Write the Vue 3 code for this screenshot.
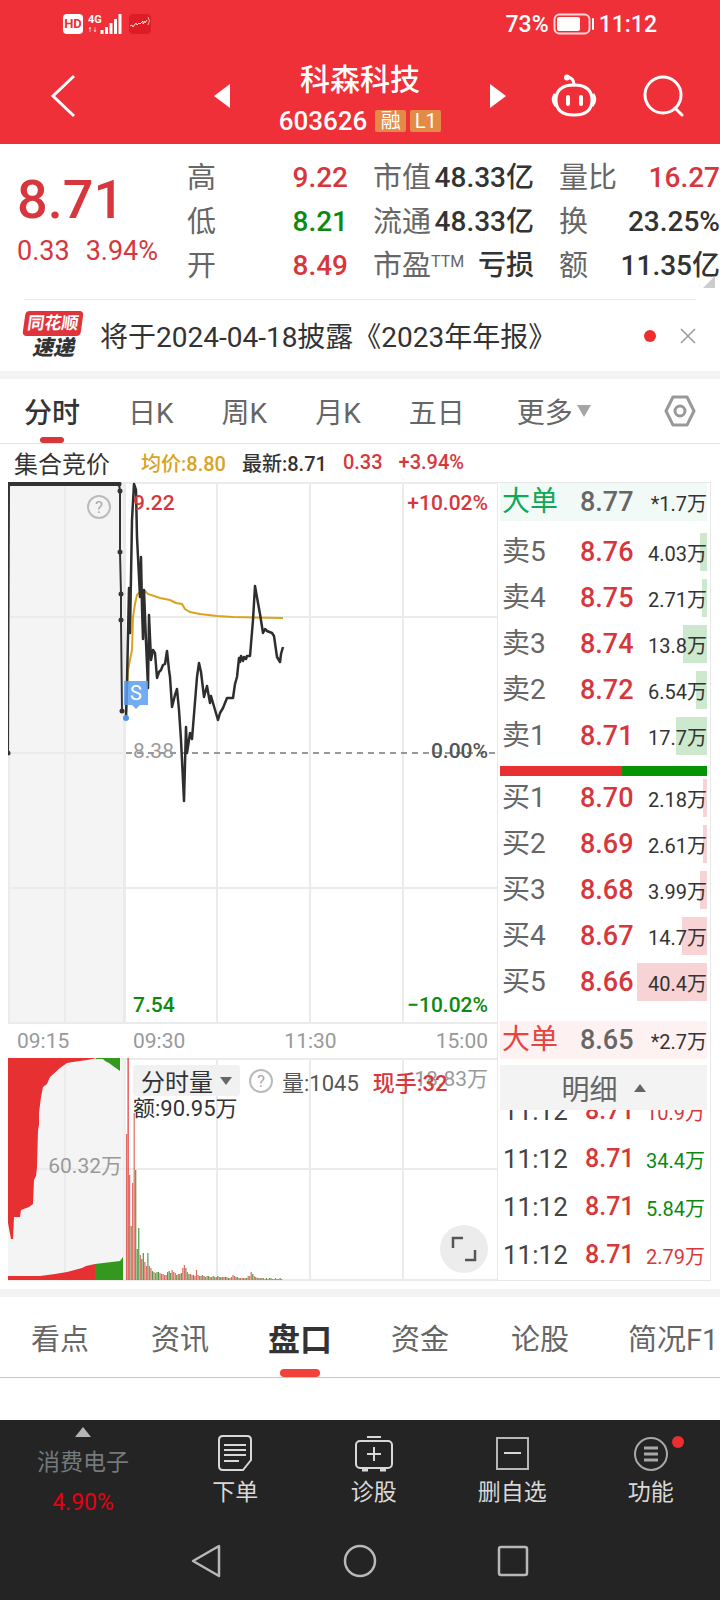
<template>
  <div class="quote-view">
    <header class="header">
      <div class="status-bar">
        <div class="status-left">
          <span class="hd">HD</span>
          <svg class="signal" width="36" height="24" viewBox="0 0 36 24">
            <text x="0" y="11" class="signal-text">4G</text>
            <path d="M2 20v-4M1 17l1-2 1 2M7 15v4M6 18l1 2 1-2" stroke="#fff" stroke-opacity=".6" fill="none" />
            <path d="M14 22v-4M18.500 22v-7M23 22v-11M27.500 22v-15M32 22V2" stroke="#fff" stroke-width="3" />
          </svg>
          <svg class="app-badge" width="22" height="20" viewBox="0 0 22 20">
            <rect width="22" height="20" rx="4" fill="#de1c25" />
            <path d="M1 12l2-1 1 2 3-4 1 2 2-2 1 1 3-3v3l2-3v2l2-3" fill="none" stroke="#ffd9d0" />
            <path d="M19 3q3 4 0 8" fill="none" stroke="#ffb0a0" />
          </svg>
        </div>
        <div class="status-right">
          <span>73%</span>
          <svg width="42" height="22" viewBox="0 0 42 22">
            <rect x="1.500" y="1.500" width="35" height="19" rx="5" fill="none" stroke="#fff" stroke-opacity=".8" stroke-width="2" />
            <rect x="4" y="4" width="23" height="14" rx="2" fill="#fff" />
            <path d="M40 6v10" stroke="#fff" stroke-width="2" stroke-linecap="round" />
          </svg>
          <span>11:12</span>
        </div>
      </div>
      <div class="title-bar">
        <button class="back" aria-label="返回">
          <svg width="26" height="44" viewBox="0 0 26 44"><path d="M24 2L3 22l21 20" fill="none" stroke="#fff" stroke-width="3" /></svg>
        </button>
        <div class="switcher">
          <button aria-label="上一只">
            <svg width="16" height="24" viewBox="0 0 16 24"><path d="M16 0v24L0 12z" fill="#fff" /></svg>
          </button>
          <div class="stock">
            <h1>科森科技</h1>
            <p><span class="code">603626</span><span class="tag">融</span><span class="tag">L1</span></p>
          </div>
          <button aria-label="下一只">
            <svg width="16" height="24" viewBox="0 0 16 24"><path d="M0 0v24l16-12z" fill="#fff" /></svg>
          </button>
        </div>
        <button aria-label="智能助手">
          <svg width="46" height="44" viewBox="0 0 46 44" fill="none" stroke="#fff" stroke-width="3">
            <path d="M23 11c0-4-1-7-6-8" stroke-linecap="round" />
            <circle cx="16" cy="3.500" r="2" fill="#fff" stroke-width="2" />
            <path d="M23 11C11 11 5 16 5 26S11 41 23 41s18-5 18-15S35 11 23 11z" />
            <path d="M4 20q-4 6 1 12M42 20q4 6-1 12" />
            <path d="M17 23v7M30 23v7" stroke-width="4" stroke-linecap="round" />
          </svg>
        </button>
        <button aria-label="搜索">
          <svg width="42" height="42" viewBox="0 0 42 42" fill="none" stroke="#fff" stroke-width="3">
            <circle cx="20" cy="20" r="18" />
            <path d="M32 33l7 7" stroke-linecap="round" />
          </svg>
        </button>
      </div>
    </header>

    <section class="summary">
      <div class="price">
        <strong>8.71</strong>
        <p><span>0.33</span><span>3.94%</span></p>
      </div>
      <dl v-for="(group, index) in stats" :key="index">
        <div v-for="item in group" :key="item.label">
          <dt>{{ item.label }}<sup v-if="item.sup">{{ item.sup }}</sup></dt>
          <dd :class="item.tone">{{ item.value }}</dd>
        </div>
      </dl>
      <i class="corner"></i>
    </section>

    <section class="notice">
      <div class="notice-logo"><b>同花顺</b><em>速递</em></div>
      <a href="#">将于2024-04-18披露《2023年年报》</a>
      <i class="dot"></i>
      <button aria-label="关闭">
        <svg width="16" height="16" viewBox="0 0 16 16"><path d="M1 1l14 14M15 1L1 15" stroke="#999" stroke-width="1.500" /></svg>
      </button>
    </section>

    <nav class="period-tabs">
      <button v-for="tab in periods" :key="tab" :class="{ active: tab === period }" @click="period = tab">{{ tab }}</button>
      <button class="more">更多<i></i></button>
      <button class="settings" aria-label="设置">
        <svg width="32" height="32" viewBox="0 0 32 32" fill="none" stroke="#999" stroke-width="3">
          <path d="M9 2h14l7 14-7 14H9L2 16z" stroke-linejoin="round" />
          <circle cx="16" cy="16" r="5" />
        </svg>
      </button>
    </nav>

    <div class="legend">
      <span class="auction">集合竞价</span>
      <span class="avg">均价:8.80</span>
      <span>最新:8.71</span>
      <span class="up">0.33</span>
      <span class="up">+3.94%</span>
    </div>

    <main class="board">
      <div class="charts">
        <svg class="chart" viewBox="0 0 489 542">
          <rect x="0" y="0" width="115" height="542" fill="#f4f4f5" />
          <rect x="115" y="0" width="3" height="542" fill="#ebebeb" />
          <path d="M0 1h489M0 135h489M0 406h489M0 541h489M57 0v541M209 0v541M302 0v541M395 0v541M0 271h116M1 0v541" class="grid" />
          <path d="M118 271h371" stroke="#999" stroke-width="2" stroke-dasharray="6 5" />
          <polyline :points="auctionLine" fill="none" stroke="#333" stroke-width="2" />
          <path d="M0 2h112" stroke="#333" stroke-width="4" />
          <circle v-for="(p, i) in auctionDots" :key="i" :cx="p[0]" :cy="p[1]" r="2.500" fill="#333" />
          <circle cx="91" cy="25" r="11" fill="none" stroke="#bbb" stroke-width="2" />
          <text x="91" y="31" class="mark">?</text>
          <polyline :points="averageLine" fill="none" stroke="#dba21c" stroke-width="2" />
          <polyline :points="priceLine" fill="none" stroke="#2e2e2e" stroke-width="2.500" stroke-linejoin="round" />
          <circle cx="118" cy="236" r="3" fill="#4a94ee" />
          <path d="M116 199h24v24h-8l-4 4-4-4h-8z" fill="#5b9eef" fill-opacity=".85" />
          <text x="128" y="218" class="sell">S</text>
          <text x="125" y="28" class="up">9.22</text>
          <text x="480" y="28" class="up end">+10.02%</text>
          <text x="125" y="276" class="flat">8.38</text>
          <text x="480" y="276" class="base end">0.00%</text>
          <text x="125" y="530" class="down">7.54</text>
          <text x="480" y="530" class="down end">−10.02%</text>
        </svg>

        <div class="axis">
          <span class="axis-auction">09:15</span>
          <div><span>09:30</span><span>11:30</span><span>15:00</span></div>
        </div>

        <div class="volume">
          <svg class="chart" viewBox="0 0 489 223">
            <rect x="0" y="0" width="115" height="223" fill="#f4f4f5" />
            <rect x="115" y="0" width="3" height="223" fill="#f0f0f0" />
            <path d="M0 1h489M0 111h489M0 222h489M57 0v222M209 0v222M302 0v222M395 0v222" class="grid" />
            <path d="M0 0H89L79 2 65 4 59 5 52 10 42 19 39 26 35 29 33 39 31 55 31 67 30 72 29 109 28 118 26 122 25 146 21 149 13 152 12 159 6 159 5 181H3L0 165z" fill="#e63031" />
            <path d="M88 0h24v13l-7-5-4-3-4-2-2-2h-7z" fill="#34981f" />
            <path d="M0 222v-4h32l15-2 12-2 15-4 4-2 9-2v16z" fill="#e63031" />
            <path d="M87 222v-16l25-3 3-4v23z" fill="#34981f" />
            <rect v-for="bar in volumeBars" :key="bar.x" :x="bar.x" :y="222 - bar.h" width="1.200" :height="bar.h" :fill="bar.color" />
            <text x="114" y="115" class="flat end">60.32万</text>
            <text x="480" y="28" class="flat end">18.83万</text>
          </svg>
          <div class="volume-info">
            <div class="volume-row">
              <button class="indicator">分时量<i></i></button>
              <span class="help">?</span>
              <span>量:1045</span>
              <span class="now">现手:32</span>
            </div>
            <p>额:90.95万</p>
          </div>
          <button class="expand" aria-label="全屏">
            <svg width="26" height="26" viewBox="0 0 26 26"><path d="M2 12V2h10M24 14v10H14" fill="none" stroke="#555" stroke-width="2.500" /></svg>
          </button>
        </div>
      </div>

      <aside class="book">
        <table>
          <tbody>
            <tr class="big sell"><td>大单</td><td>8.77</td><td>*1.7万</td></tr>
            <tr v-for="row in asks" :key="row.label" class="ask">
              <td>{{ row.label }}</td>
              <td>{{ row.price }}</td>
              <td><i :style="{ width: depth(row.volume) }"></i><span>{{ row.volume }}万</span></td>
            </tr>
          </tbody>
        </table>
        <div class="ratio"><i></i></div>
        <table>
          <tbody>
            <tr v-for="row in bids" :key="row.label" class="bid">
              <td>{{ row.label }}</td>
              <td>{{ row.price }}</td>
              <td><i :style="{ width: depth(row.volume) }"></i><span>{{ row.volume }}万</span></td>
            </tr>
            <tr class="big buy"><td>大单</td><td>8.65</td><td>*2.7万</td></tr>
          </tbody>
        </table>
        <button class="detail">明细<i></i></button>
        <div class="trades">
          <table>
            <tbody>
              <tr v-for="(trade, index) in trades" :key="index">
                <td>11:12</td>
                <td>8.71</td>
                <td :class="trade.tone">{{ trade.volume }}</td>
              </tr>
            </tbody>
          </table>
        </div>
      </aside>
    </main>

    <nav class="section-tabs">
      <button v-for="tab in sections" :key="tab" :class="{ active: tab === section }" @click="section = tab">{{ tab }}</button>
    </nav>
    <div class="blank"></div>

    <footer class="footer">
      <div class="actions">
        <a href="#" class="industry">
          <i></i>
          <span>消费电子</span>
          <b>4.90%</b>
        </a>
        <button>
          <svg width="36" height="38" viewBox="0 0 36 38" fill="none" stroke="#d8d8d8" stroke-width="2">
            <path d="M6 2h24q4 0 4 4v20l-8 10H6q-4 0-4-4V6q0-4 4-4z" />
            <path d="M7 11h22M7 16h22M7 21h22M7 27h15" />
          </svg>
          下单
        </button>
        <button>
          <svg width="40" height="38" viewBox="0 0 40 38" fill="none" stroke="#d8d8d8" stroke-width="2">
            <rect x="2" y="7" width="36" height="27" rx="4" />
            <path d="M13 3h14M20 13v14M13 20h14" />
            <path d="M8 36h6M26 36h6" stroke-width="3" />
          </svg>
          诊股
        </button>
        <button>
          <svg width="36" height="38" viewBox="0 0 36 38" fill="none" stroke="#d8d8d8" stroke-width="2">
            <rect x="3" y="4" width="31" height="31" stroke="#b8b8b8" />
            <path d="M10 19h17" />
          </svg>
          删自选
        </button>
        <button class="has-dot">
          <svg width="36" height="38" viewBox="0 0 36 38" fill="none" stroke="#a8a8a8" stroke-width="2">
            <circle cx="18" cy="20" r="16" />
            <path d="M11 14h14M11 20h14M11 26h14" stroke-width="3" />
          </svg>
          功能
        </button>
      </div>
      <div class="system-nav">
        <button aria-label="后退">
          <svg width="32" height="36" viewBox="0 0 32 36"><path d="M28 3v30L2 18z" fill="none" stroke="#b8b8b8" stroke-width="2.500" stroke-linejoin="round" /></svg>
        </button>
        <button aria-label="主页">
          <svg width="34" height="36" viewBox="0 0 34 36"><circle cx="17" cy="18" r="15" fill="none" stroke="#b8b8b8" stroke-width="2.500" /></svg>
        </button>
        <button aria-label="最近任务">
          <svg width="32" height="36" viewBox="0 0 32 36"><rect x="2" y="4" width="28" height="28" rx="2" fill="none" stroke="#b8b8b8" stroke-width="2.500" /></svg>
        </button>
      </div>
    </footer>
  </div>
</template>

<script setup>
import { ref, computed } from 'vue';

const periods = ['分时', '日K', '周K', '月K', '五日'];
const period = ref('分时');

const sections = ['看点', '资讯', '盘口', '资金', '论股', '简况F1'];
const section = ref('盘口');

const stats = [
  [
    { label: '高', value: '9.22', tone: 'up' },
    { label: '低', value: '8.21', tone: 'down' },
    { label: '开', value: '8.49', tone: 'up' }
  ],
  [
    { label: '市值', value: '48.33亿' },
    { label: '流通', value: '48.33亿' },
    { label: '市盈', sup: 'TTM', value: '亏损' }
  ],
  [
    { label: '量比', value: '16.27', tone: 'up' },
    { label: '换', value: '23.25%' },
    { label: '额', value: '11.35亿' }
  ]
];

const asks = [
  { label: '卖5', price: '8.76', volume: '4.03' },
  { label: '卖4', price: '8.75', volume: '2.71' },
  { label: '卖3', price: '8.74', volume: '13.8' },
  { label: '卖2', price: '8.72', volume: '6.54' },
  { label: '卖1', price: '8.71', volume: '17.7' }
];

const bids = [
  { label: '买1', price: '8.70', volume: '2.18' },
  { label: '买2', price: '8.69', volume: '2.61' },
  { label: '买3', price: '8.68', volume: '3.99' },
  { label: '买4', price: '8.67', volume: '14.7' },
  { label: '买5', price: '8.66', volume: '40.4' }
];

const trades = [
  { volume: '10.9万', tone: 'up' },
  { volume: '34.4万', tone: 'down' },
  { volume: '5.84万', tone: 'down' },
  { volume: '2.79万', tone: 'up' }
];

// The deepest level fills about a third of the row
const depth = (volume) => `${Number(volume) / 40.4 * 33.7}%`;

const auctionDots = [[0, 271], [1, 2], [111, 2], [112, 9], [112, 70], [113, 112], [113, 138], [114, 229]];
const auctionLine = computed(() => auctionDots.map((p) => p.join(',')).join(' '));

const averageLine = '118,235 120,188 122,178 124,168 125,135 127,122 129,113 132,110 137,109 140,112 152,116 162,118 168,121 174,122 177,127 182,130 192,132 209,134 225,135 275,136';

const priceLine = '118,235 119,201 121,106 122,151 124,38 126,2 128,8 129,55 132,115 133,75 134,125 135,157 136,108 138,160 140,206 141,133 143,178 145,168 147,171 149,196 151,190 153,188 155,183 157,182 159,169 161,188 162,195 164,225 167,213 169,207 171,228 173,258 176,319 178,245 179,271 182,251 184,257 187,220 189,195 191,181 193,190 196,215 199,204 202,221 203,214 205,221 210,238 212,231 215,226 219,216 225,216 227,202 229,195 231,176 232,180 233,174 235,179 236,175 238,177 239,174 242,174 245,138 247,104 250,121 252,132 255,151 257,147 259,149 264,151 266,154 269,175 272,180 273,172 275,165';

// Positive is a rising minute, negative a falling one
const volumes = [
  146, 223, 105, -54, 97, 167, -110, -31, -52, 25, -21, -27, 18, 14, -27, 14, 12, -9, 8, 7, -8, -8, 7, 6,
  6, 5, 5, -8, -9, -7, 10, 8, 7, -5, 6, -6, -7, 12, 15, -12, 8, -6, 6, 5, -5, 4, 10, 5, 4, -4,
  5, -4, 3, 4, -4, 3, -3, 4, -3, 3, -4, 3, -3, 3, 3, -3, 3, -2, 2, 3, 5, 4, -3, 3, -2, 2,
  2, -2, 2, -2, 4, 4, 8, -6, 4, -3, 2, -2, 2, -2, 2, 1, -2, 1, 2, -2, 1, -1, 2, -1, 1, -2, 1
];

const volumeBars = volumes.map((v, i) => ({
  x: 118 + i * 1.52,
  h: Math.abs(v),
  color: v > 0 ? (i === 1 ? '#e63031' : '#dc6a60') : '#4f9a45'
}));
</script>

<style>
html {
  background: #fff;
}
</style>

<style scoped>
.quote-view {
  font-family: Roboto, "Noto Sans CJK SC", sans-serif;
  color: #333;
  background: #fff;
  overflow: hidden;
}

h1, p, dl, dd {
  margin: 0;
}

button {
  display: flex;
  align-items: center;
  padding: 0;
  border: none;
  background: none;
  font-family: inherit;
  color: inherit;
  cursor: pointer;
}

a {
  color: inherit;
  text-decoration: none;
}

svg {
  display: block;
}

.up {
  color: #d7373c;
  fill: #d7373c;
}

.down {
  color: #0b8a0f;
  fill: #0b8a0f;
}

/* header */
.header {
  background: #f03038;
  color: #fff;
}

.status-bar {
  display: flex;
  justify-content: space-between;
  align-items: center;
  height: 48px;
  padding: 0 63px;
}

.status-left {
  display: flex;
  align-items: center;
  gap: 5px;
}

.hd {
  width: 20px;
  border-radius: 4px;
  background: #fff;
  color: #f03038;
  font-size: 13px;
  font-weight: 700;
  line-height: 20px;
  text-align: center;
}

.signal-text {
  fill: #fff;
  font-size: 11px;
  font-weight: 700;
}

.status-right {
  display: flex;
  align-items: center;
  gap: 4px;
  font-size: 23px;
  font-weight: 500;
}

.title-bar {
  display: flex;
  align-items: center;
  height: 96px;
  padding: 0 35px 0 50px;
}

.title-bar > button + button {
  margin-left: 46px;
}

.switcher {
  display: flex;
  flex: 1;
  justify-content: space-between;
  align-items: center;
  padding: 0 45px 0 138px;
}

.stock {
  padding-top: 8px;
  text-align: center;
}

.stock h1 {
  font-size: 30px;
  font-weight: 500;
  line-height: 42px;
}

.stock p {
  display: flex;
  align-items: center;
  gap: 4px;
  line-height: 40px;
}

.code {
  margin-right: 4px;
  font-size: 26px;
  font-weight: 500;
}

.tag {
  width: 31px;
  border-radius: 2px;
  background: #e48a47;
  font-size: 20px;
  line-height: 22px;
}

/* summary */
.summary {
  position: relative;
  display: grid;
  grid-template-columns: 145px repeat(3, 1fr);
  gap: 25px;
  padding: 12px 0 11px 17px;
}

.price {
  padding-top: 12px;
  color: #d7373c;
}

.price strong {
  display: block;
  font-size: 54px;
  font-weight: 500;
  line-height: 64px;
}

.price p {
  display: flex;
  gap: 16px;
  font-size: 27px;
  line-height: 38px;
}

.summary dl div {
  display: flex;
  justify-content: space-between;
  line-height: 44px;
  white-space: nowrap;
}

.summary dt {
  color: #666;
  font-size: 29px;
}

.summary dt sup {
  font-size: 16px;
  line-height: 16px;
  vertical-align: 9px;
}

.summary dd {
  font-size: 28px;
  font-weight: 500;
}

.corner {
  position: absolute;
  right: 5px;
  bottom: 11px;
  border: 6px solid;
  border-color: transparent #ccc #ccc transparent;
}

/* notice */
.notice {
  display: flex;
  align-items: center;
  height: 71px;
  margin: 0 24px;
  border-top: 1px solid #e8e8e8;
}

.notice-logo {
  width: 58px;
  margin-right: 18px;
  text-align: center;
}

.notice-logo b {
  display: block;
  border-radius: 4px;
  background: #e0343a;
  color: #fff;
  font-size: 17px;
  line-height: 25px;
  transform: skewX(-8deg);
}

.notice-logo em {
  display: block;
  font-size: 21px;
  font-weight: 900;
  line-height: 24px;
}

.notice a {
  flex: 1;
  padding-bottom: 2px;
  font-size: 28px;
  white-space: nowrap;
}

.dot {
  width: 12px;
  height: 12px;
  margin-right: 24px;
  border-radius: 50%;
  background: #ee2e2e;
}

/* period tabs */
.period-tabs {
  display: flex;
  gap: 48px;
  height: 64px;
  padding: 0 24px;
  border-top: 8px solid #f3f3f4;
  border-bottom: 1px solid #e2e2e2;
}

.period-tabs button {
  position: relative;
  color: #666;
  font-size: 28px;
}

.period-tabs .active {
  color: #333;
  font-weight: 500;
}

.period-tabs .active::after {
  content: "";
  position: absolute;
  left: 50%;
  bottom: 0;
  width: 24px;
  height: 6px;
  margin-left: -12px;
  border-radius: 3px;
  background: #d9363b;
}

.period-tabs .more {
  margin-left: 4px;
}

.more i {
  margin-left: 4px;
  border: 7px solid transparent;
  border-top: 12px solid #a5a5a5;
  border-bottom: 0;
}

.period-tabs .settings {
  margin-left: auto;
}

.legend {
  display: flex;
  align-items: center;
  gap: 16px;
  height: 36px;
  padding: 0 0 2px 14px;
  font-size: 20px;
  font-weight: 500;
}

.legend .auction {
  margin-right: 15px;
  font-size: 24px;
  font-weight: 400;
}

.legend .avg {
  color: #dba21c;
}

/* charts */
.board {
  display: grid;
  grid-template-columns: 489fr 214fr;
  padding: 0 9px 8px 8px;
}

.chart {
  width: 100%;
}

.grid {
  fill: none;
  stroke: #ebebeb;
  stroke-width: 2;
}

.chart text {
  font-size: 21px;
  font-weight: 500;
}

.chart .end {
  text-anchor: end;
}

.chart .flat {
  fill: #999;
  font-weight: 400;
}

.chart .base {
  fill: #555;
}

.chart .mark {
  fill: #aaa;
  font-size: 17px;
  font-weight: 400;
  text-anchor: middle;
}

.chart .sell {
  fill: #fff;
  font-size: 20px;
  font-weight: 400;
  text-anchor: middle;
}

.axis {
  display: flex;
  color: #999;
  font-size: 21px;
  line-height: 34px;
}

.axis-auction {
  width: 116px;
  padding-left: 9px;
}

.axis div {
  display: flex;
  flex: 1;
  justify-content: space-between;
  padding-right: 9px;
}

.volume {
  position: relative;
}

.volume-info {
  position: absolute;
  top: 7px;
  left: 125px;
  font-size: 22px;
}

.volume-row {
  display: flex;
  align-items: center;
  height: 31px;
  color: #555;
  white-space: nowrap;
}

.indicator {
  gap: 7px;
  height: 31px;
  padding: 0 8px;
  border-radius: 3px;
  background: #f1f1f1;
  color: #333;
  font-size: 24px;
}

.indicator i {
  border: 6px solid transparent;
  border-top: 8px solid #666;
  border-bottom: 0;
}

.help {
  width: 20px;
  margin: 0 9px;
  border: 2px solid #bbb;
  border-radius: 50%;
  color: #aaa;
  font-size: 17px;
  line-height: 20px;
  text-align: center;
}

.now {
  margin-left: 14px;
  color: #d7373c;
  font-weight: 500;
}

.volume-info p {
  line-height: 26px;
}

.expand {
  position: absolute;
  right: 9px;
  bottom: 8px;
  justify-content: center;
  width: 48px;
  height: 48px;
  border-radius: 50%;
  background: #ececec;
}

/* order book */
.book {
  padding: 0 3px 0 2px;
  border: 1px solid #e8e8e8;
}

.book table {
  display: block;
}

.book tbody {
  display: grid;
  gap: 8px;
}

.book tr {
  position: relative;
  display: grid;
  grid-template-columns: 78px 54px 1fr;
  height: 38px;
  padding: 0 0 0 2px;
  line-height: 38px;
}

.book td {
  padding: 0;
  color: #666;
  font-size: 28px;
  white-space: nowrap;
}

.book td:nth-child(2) {
  color: #d7373c;
  font-size: 27px;
  font-weight: 500;
}

.book td:nth-child(3) {
  color: #333;
  font-size: 20px;
  line-height: 42px;
  text-align: right;
}

.book td span {
  position: relative;
}

.book td i {
  position: absolute;
  top: 0;
  right: 0;
  height: 38px;
}

.ask i {
  background: #cce8cd;
}

.bid i {
  background: #f7d3d5;
}

.book .big td:nth-child(2) {
  color: #666;
}

.book .sell {
  margin-bottom: 4px;
  background: #f1faf6;
}

.book .sell td:first-child {
  color: #12a756;
}

.book .buy {
  margin-top: 12px;
  background: #fef1f1;
}

.book .buy td:first-child {
  color: #e8443f;
}

.ratio {
  height: 10px;
  margin: 11px 0 3px;
  background: #049404;
}

.ratio i {
  display: block;
  width: 59%;
  height: 10px;
  background: #e63031;
}

.detail {
  justify-content: center;
  gap: 16px;
  width: 100%;
  height: 45px;
  margin-top: 6px;
  background: #f3f3f4;
  color: #666;
  font-size: 28px;
}

.detail i {
  border: 6px solid transparent;
  border-top: 0;
  border-bottom: 8px solid #666;
}

.trades {
  display: flex;
  align-items: flex-end;
  height: 169px;
  overflow: hidden;
}

.trades table {
  flex: 1;
}

.trades tbody {
  gap: 0;
}

.trades tr {
  grid-template-columns: 82px 54px 1fr;
  height: 48px;
  padding: 0 2px 0 3px;
  line-height: 48px;
}

.trades td:first-child {
  color: #444;
  font-size: 26px;
}

.trades td:nth-child(2) {
  font-size: 25px;
}

.trades td:nth-child(3) {
  line-height: 52px;
}

.trades td.up:nth-child(3) {
  color: #d7373c;
}

.trades td.down:nth-child(3) {
  color: #0b8a0f;
}

/* section tabs */
.section-tabs {
  display: flex;
  height: 80px;
  border-top: 8px solid #f3f3f4;
  border-bottom: 1px solid #c8c8c8;
}

.section-tabs button {
  position: relative;
  flex: 0 0 calc(100% / 6);
  justify-content: center;
  color: #666;
  font-size: 29px;
  white-space: nowrap;
}

.section-tabs button:last-child {
  justify-content: flex-start;
  padding-left: 28px;
}

.section-tabs .active {
  color: #333;
  font-size: 32px;
  font-weight: 700;
}

.section-tabs .active::after {
  content: "";
  position: absolute;
  bottom: 0;
  width: 40px;
  height: 8px;
  border-radius: 4px;
  background: #f0413a;
}

.blank {
  height: 42px;
}

/* footer */
.footer {
  background: #242424;
  color: #d8d8d8;
}

.actions {
  display: grid;
  grid-template-columns: 166px repeat(4, 1fr);
  height: 102px;
}

.actions button {
  flex-direction: column;
  gap: 4px;
  padding-top: 14px;
  font-size: 23px;
  line-height: 34px;
}

.industry {
  display: flex;
  flex-direction: column;
  align-items: center;
  padding-top: 7px;
  color: #74797c;
  font-size: 23px;
  line-height: 40px;
}

.industry i {
  border: 8px solid transparent;
  border-top: 0;
  border-bottom: 10px solid #b5b5b5;
}

.industry span {
  margin-top: 6px;
}

.industry b {
  color: #e60012;
  font-weight: 400;
}

.has-dot {
  position: relative;
}

.has-dot::after {
  content: "";
  position: absolute;
  top: 16px;
  left: 50%;
  width: 12px;
  height: 12px;
  margin-left: 21px;
  border-radius: 50%;
  background: #ee2e2e;
}

.system-nav {
  display: flex;
  justify-content: center;
  align-items: center;
  gap: 120px;
  height: 78px;
}
</style>
